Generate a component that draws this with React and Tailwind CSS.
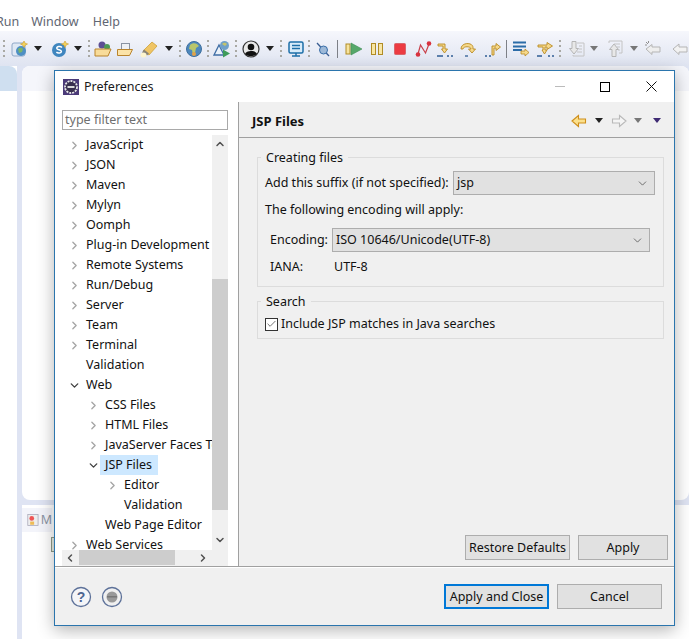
import { ChevronRight, ChevronDown, ChevronUp, ChevronLeft, Check } from "lucide-react"

function Grip({ className }) {
  return (
    <div className={`flex h-[22px] w-[2px] shrink-0 flex-col justify-between py-[2px] ${className}`}>
      <i className="h-[2px] bg-[#a9a9a4]" />
      <i className="h-[2px] bg-[#a9a9a4]" />
      <i className="h-[2px] bg-[#a9a9a4]" />
      <i className="h-[2px] bg-[#a9a9a4]" />
    </div>
  )
}

function Drop({ className, color = "border-t-[#222]" }) {
  return (
    <div className={`mr-px h-0 w-0 shrink-0 border-x-[4px] border-t-[5px] border-x-transparent ${color} ${className}`} />
  )
}

function Sep({ className }) {
  return <div className={`h-[18px] w-px shrink-0 bg-[#7d8087] ${className}`} />
}

function Ico({ className, children }) {
  return (
    <svg viewBox="0 0 18 18" className={`h-[18px] w-[18px] shrink-0 ${className}`}>
      {children}
    </svg>
  )
}

function Toolbar() {
  return (
    <div className="flex h-[35px] items-center bg-gradient-to-b from-[#f6f7fc] to-[#dfe4f1] pl-[3px]">
      <Grip />
      <Ico className="ml-[6px]">
        <rect x="1" y="3" width="13" height="13" rx="2" fill="#dfe8f4" stroke="#8fa8c8" />
        <circle cx="10" cy="11" r="5" fill="#4d8fc4" />
        <path d="M7 9c2-2 4-1 5 0l-1 3-3 1z" fill="#7cb56a" />
        <path d="M13 1l1.200 2.300L16.500 4l-2.300 1.200L13 7.500 11.800 5.200 9.500 4l2.300-.7z" fill="#f3d35c" stroke="#c99a2a" strokeWidth=".6" />
      </Ico>
      <Drop className="ml-[5px]" />
      <Ico className="ml-[8px]">
        <circle cx="8" cy="10" r="7" fill="#3f86bf" />
        <path d="M11 7.500C9.500 6 5.500 6.300 5.800 8.400c.3 1.900 4.600 1 4.600 3 0 1.900-3.600 1.900-5 .7" fill="none" stroke="#fff" strokeWidth="1.500" />
        <path d="M14 1l1.100 2.200L17.500 4l-2.400 1L14 7.500 12.900 5 10.500 4l2.400-.8z" fill="#f3d35c" stroke="#c99a2a" strokeWidth=".6" />
      </Ico>
      <Drop className="ml-[5px]" />
      <Grip className="ml-[5px]" />
      <Ico className="ml-[4px]">
        <circle cx="8" cy="5" r="3.500" fill="#5d4f94" />
        <circle cx="13" cy="7" r="3" fill="#4d9a55" />
        <path d="M1 9h12l4 0-3 7H1z" fill="#f8dc9a" stroke="#b9842d" />
      </Ico>
      <Ico className="ml-[4px]">
        <rect x="5.500" y="3.500" width="8" height="6" fill="#eef1f6" stroke="#8a93a3" />
        <path d="M1.500 9.500h15l-3 6h-12z" fill="#fbe3a8" stroke="#b9842d" />
      </Ico>
      <Ico className="ml-[6px]">
        <path d="M3 11L12 2l5 4-8 9z" fill="#f0c565" stroke="#c99a2a" strokeWidth=".7" />
        <path d="M4 9.500l5 4-2 2-5-3z" fill="#8a8577" />
        <ellipse cx="3.500" cy="15" rx="3" ry="2.500" fill="#fdf5cf" />
      </Ico>
      <Drop className="ml-[7px]" />
      <Grip className="ml-[5px]" />
      <Ico className="ml-[4px]">
        <circle cx="9" cy="9" r="7.500" fill="#4e88bd" stroke="#3e6f9e" />
        <path d="M5 5c3-3 7-2 9 1l-3 2-1 5-2 2-1-5-3-1z" fill="#b9c66b" />
        <circle cx="9" cy="14" r="2" fill="#e0a14a" />
      </Ico>
      <Grip className="ml-[4px]" />
      <Ico className="ml-[4px]">
        <path d="M1 15L6 5l5 10z" fill="#eaf1f9" stroke="#3f6ea5" strokeWidth="1.300" />
        <circle cx="11.500" cy="5.500" r="4.500" fill="#6fa0c9" />
        <path d="M9 4c2-2 4-1 5 0l-2 2z" fill="#c5c36a" />
        <path d="M10 9.500l7 4-7 4z" fill="#3e9c5a" />
      </Ico>
      <Grip className="ml-[4px]" />
      <Ico className="ml-[5px]">
        <circle cx="9" cy="9" r="8" fill="#e9e9e9" stroke="#333" strokeWidth="1.200" />
        <circle cx="9" cy="7" r="3.300" fill="#111" />
        <path d="M3 14c1-4 11-4 12 0-3 3-9 3-12 0z" fill="#111" />
      </Ico>
      <Drop className="ml-[6px]" />
      <Grip className="ml-[5px]" />
      <Ico className="ml-[5px]">
        <rect x="2" y="2" width="14" height="11" rx="1.500" fill="#d8ecfa" stroke="#1d6fa8" strokeWidth="1.500" />
        <path d="M5 5.500h8M5 8.500h8" stroke="#1d6fa8" strokeWidth="1.300" />
        <path d="M5 16h8M9 13v3" stroke="#1d6fa8" strokeWidth="1.500" />
      </Ico>
      <Grip className="ml-[3px]" />
      <Ico className="ml-[4px]">
        <path d="M3 3l12 13" stroke="#3a5d92" strokeWidth="1.300" />
        <circle cx="9.500" cy="10" r="4" fill="#9db9d8" stroke="#3a6ea8" />
      </Ico>
      <Sep className="ml-[5px]" />
      <Ico className="ml-[7px]">
        <rect x="1" y="4" width="4" height="10" fill="#f6e39e" stroke="#b08c26" />
        <path d="M6 3l11 6-11 6z" fill="#56a86a" stroke="#3d8d56" strokeWidth=".6" />
      </Ico>
      <Ico className="ml-[5px]">
        <rect x="3.500" y="3.500" width="4" height="11" fill="#f8e6a5" stroke="#b08c26" />
        <rect x="10.500" y="3.500" width="4" height="11" fill="#f8e6a5" stroke="#b08c26" />
      </Ico>
      <Ico className="ml-[5px]">
        <rect x="3.500" y="3.500" width="11" height="11" rx="1" fill="#ec3b42" stroke="#d8656b" />
      </Ico>
      <Ico className="ml-[5px]">
        <path d="M4 14L6.500 5l5 8L15 4" fill="none" stroke="#c9404a" strokeWidth="1.200" />
        <circle cx="4" cy="14.500" r="2.300" fill="#d8323f" />
        <circle cx="15" cy="3.500" r="2.300" fill="#d8323f" />
      </Ico>
      <Ico className="ml-[4px]">
        <path d="M2 4h7v5h2.500L8.500 13 5.500 9H7V6H2z" fill="#f6d98b" stroke="#b98a22" strokeWidth=".9" />
        <path d="M1 16h6M11 16h2M15 16h2" stroke="#2f5d94" strokeWidth="1.300" />
      </Ico>
      <Ico className="ml-[5px]">
        <path d="M2 9C2 2 14 2 14 7.500V9h2.500L13 13 9.500 9H12c0-3-8-3-8 0z" fill="#f6d98b" stroke="#b98a22" strokeWidth=".9" />
        <path d="M6 16h3" stroke="#2f5d94" strokeWidth="1.300" />
      </Ico>
      <Ico className="ml-[7px]">
        <path d="M8 15V6h4V3.500L16.500 7 12 10.500V8h-2v7z" fill="#f6d98b" stroke="#b98a22" strokeWidth=".9" />
        <path d="M1 16h2M5 16h2" stroke="#2f5d94" strokeWidth="1.300" />
      </Ico>
      <Sep className="ml-[4px]" />
      <Ico className="ml-[5px]">
        <path d="M1 2.500h13M1 6.500h13M1 10h9" stroke="#2b6ca8" strokeWidth="2" />
        <path d="M9 11h4V9l4 3.500-4 3.500v-2H9z" fill="#f6d98b" stroke="#b98a22" strokeWidth=".8" />
      </Ico>
      <Ico className="ml-[7px]">
        <path d="M1 5h9V2.500L15.500 6 10 9.500V7H8v3h2l-2.500 4L5 10h1V7H1z" fill="#f6d98b" stroke="#b98a22" strokeWidth=".9" />
        <path d="M0 16h5M11 16h2M15 16h2" stroke="#2f5d94" strokeWidth="1.300" />
      </Ico>
      <Grip className="ml-[4px]" />
      <Ico className="ml-[7px]">
        <path d="M4 1.500h4v7h2.500L6 14 1.500 8.500H4z" fill="#e8e8e8" stroke="#b5b5b5" />
        <path d="M9 3h7v13H5v-1" fill="none" stroke="#c4c4c4" />
        <path d="M11 6h3M11 9h3M9 12h5" stroke="#c4c4c4" />
      </Ico>
      <Drop className="ml-[4px]" color="border-t-[#777]" />
      <Ico className="ml-[7px]">
        <path d="M6 16.500h4v-7h2.500L8 4 3.500 9.500H6z" fill="#e8e8e8" stroke="#b5b5b5" />
        <path d="M3 3V1h13v12h-3" fill="none" stroke="#c4c4c4" />
        <path d="M8 4h6M11 7h3M12 10h2" stroke="#c4c4c4" />
      </Ico>
      <Drop className="ml-[6px]" color="border-t-[#777]" />
      <Ico className="ml-[5px]">
        <path d="M2 9l6-4.500V7h8v5H8v2.500z" fill="#eee" stroke="#b5b5b5" />
        <path d="M2 2l2 2M4.500 1v2M1 5h2" stroke="#8f8f8f" />
      </Ico>
      <Ico className="ml-[9px]">
        <path d="M2 9l6-5v3h8v5H8v2.500z" fill="#f2f2f2" stroke="#b5b5b5" />
      </Ico>
    </div>
  )
}

// what sits behind the dialog
function Workbench() {
  return (
    <div className="flex h-[639px] flex-col bg-white">
      <div className="flex h-[31px] items-end whitespace-nowrap text-[12.5px] leading-[18px] text-[#5f6672]">
        <span className="ml-[-4px]">Run</span>
        <span className="ml-[12px]">Window</span>
        <span className="ml-[14px]">Help</span>
      </div>
      <Toolbar />
      <div className="flex flex-1 bg-[#dfe4f3]">
        <div className="flex w-[17px] flex-col bg-white">
          <div className="h-[25px] rounded-tr-[8px] bg-[#cfdff0]" />
        </div>
        <div className="ml-[5px] flex flex-1 flex-col">
          <div className="h-[434px] rounded-[8px] bg-white">
            <div className="h-[25px] rounded-t-[8px] bg-[#f5f6fb]" />
          </div>
          <div className="mt-[5px] flex-1 bg-white">
            <div className="mt-[3px] flex h-[24px] w-[30px] items-center bg-[#f3f4fa] pl-[5px] text-[12.5px] text-[#8a93a3]">
              <svg viewBox="0 0 16 16" className="h-4 w-4">
                <rect x="1" y="1" width="13" height="14" fill="#eee" stroke="#aab" />
                <circle cx="6" cy="6" r="3" fill="#e55" />
                <rect x="4" y="10" width="5" height="4" fill="#eb5" />
              </svg>
              <span className="ml-[1px]">M</span>
            </div>
            <div className="ml-[29px] mt-[5px] h-[15px] w-[6px] border border-[#8f9a88] bg-[#e8ede4]" />
          </div>
        </div>
      </div>
    </div>
  )
}

const rows = [
  { label: "JavaScript", level: 0, arrow: "right" },
  { label: "JSON", level: 0, arrow: "right" },
  { label: "Maven", level: 0, arrow: "right" },
  { label: "Mylyn", level: 0, arrow: "right" },
  { label: "Oomph", level: 0, arrow: "right" },
  { label: "Plug-in Development", level: 0, arrow: "right" },
  { label: "Remote Systems", level: 0, arrow: "right" },
  { label: "Run/Debug", level: 0, arrow: "right" },
  { label: "Server", level: 0, arrow: "right" },
  { label: "Team", level: 0, arrow: "right" },
  { label: "Terminal", level: 0, arrow: "right" },
  { label: "Validation", level: 0 },
  { label: "Web", level: 0, arrow: "down" },
  { label: "CSS Files", level: 1, arrow: "right" },
  { label: "HTML Files", level: 1, arrow: "right" },
  { label: "JavaServer Faces Tools", level: 1, arrow: "right" },
  { label: "JSP Files", level: 1, arrow: "down", selected: true },
  { label: "Editor", level: 2, arrow: "right" },
  { label: "Validation", level: 2 },
  { label: "Web Page Editor", level: 1 },
  { label: "Web Services", level: 0, arrow: "right" },
]

function TreeRow({ row }) {
  const indent = row.level === 0 ? "pl-[5px]" : row.level === 1 ? "pl-[24px]" : "pl-[43px]"
  return (
    <div className={`flex h-5 shrink-0 items-center whitespace-nowrap ${indent}`}>
      <span className="flex w-[14px] shrink-0 items-center justify-center">
        {row.arrow === "right" && <ChevronRight size={13} strokeWidth={2.5} className="text-[#a6a6a6]" />}
        {row.arrow === "down" && <ChevronDown size={13} strokeWidth={2.5} className="text-[#404040]" />}
      </span>
      <span className={`h-5 pl-[5px] pr-[6px] leading-5 ${row.selected ? "bg-[#cde8ff]" : ""}`}>{row.label}</span>
    </div>
  )
}

function TreeNav() {
  return (
    <div className="flex w-[183px] shrink-0 flex-col bg-white pl-[7px] pr-[10px] pt-[8px]">
      <div className="flex h-[20px] items-center border border-[#a9a9a9] pl-[2px] text-[#6f6f6f]">type filter text</div>
      <div className="mt-[5px] flex h-[415px] overflow-hidden">
        <div className="flex min-w-0 flex-1 flex-col overflow-hidden">
          {rows.map((row, i) => (
            <TreeRow key={i} row={row} />
          ))}
        </div>
        <div className="flex w-[16px] shrink-0 flex-col items-center bg-[#f0f0f0]">
          <ChevronUp size={12} strokeWidth={3} className="mt-[3px] text-[#505050]" />
          <div className="mt-[129px] h-[231px] w-full bg-[#cdcdcd]" />
          <ChevronDown size={12} strokeWidth={3} className="mt-[24px] text-[#505050]" />
        </div>
      </div>
      <div className="flex h-[16px] shrink-0 items-center bg-[#f0f0f0]">
        <ChevronLeft size={12} strokeWidth={3} className="ml-[2px] text-[#505050]" />
        <div className="ml-[3px] h-[15px] w-[96px] self-start bg-[#cdcdcd]" />
        <ChevronRight size={12} strokeWidth={3} className="ml-[22px] text-[#505050]" />
      </div>
    </div>
  )
}

function Group({ title, className, children }) {
  return (
    <div className={`relative border border-[#dcdcdc] ${className}`}>
      <span className="absolute left-[3px] top-[-10px] h-[19px] bg-[#f0f0f0] px-[5px] leading-[19px]">{title}</span>
      {children}
    </div>
  )
}

function Combo({ value, className }) {
  return (
    <div className={`flex h-[24px] items-center justify-between border border-[#adadad] bg-[#e1e1e1] pl-[3px] pr-[5px] ${className}`}>
      <span>{value}</span>
      <ChevronDown size={13} strokeWidth={1.5} className="text-[#555]" />
    </div>
  )
}

function Btn({ className, children }) {
  return (
    <div className={`flex h-[25px] items-center justify-center bg-[#e1e1e1] pt-px ${className}`}>{children}</div>
  )
}

function Arrow({ className, fill, stroke, flip }) {
  return (
    <svg viewBox="0 0 16 14" className={`h-[14px] w-[16px] ${flip ? "-scale-x-100" : ""} ${className}`}>
      <path d="M1 7l6.500-5.500V5h7v4h-7v3.500z" fill={fill} stroke={stroke} strokeWidth="1.100" />
    </svg>
  )
}

function Page() {
  return (
    <div className="flex min-w-0 flex-1 flex-col border-l border-[#a0a0a0] bg-[#f0f0f0]">
      <div className="flex h-[36px] shrink-0 items-center border-b border-[#a0a0a0] pl-[13px] pr-[12px] pt-[4px]">
        <span className="text-[13px] font-bold">JSP Files</span>
        <div className="mb-[2px] ml-auto flex items-center">
          <Arrow fill="#fbe08c" stroke="#cf8f1b" />
          <Drop className="ml-[8px]" />
          <Arrow className="ml-[7px]" fill="#f5f5f5" stroke="#b9b9b9" flip />
          <Drop className="ml-[7px]" color="border-t-[#777]" />
          <Drop className="ml-[10px]" color="border-t-[#3f2a73]" />
        </div>
      </div>
      <div className="flex flex-1 flex-col pl-[18px] pr-[10px] pt-[19px]">
        <Group title="Creating files" className="h-[130px]">
          <div className="mt-[13px] flex h-[24px] items-center whitespace-nowrap pl-[7px] pr-[8px]">
            <span className="pt-px">Add this suffix (if not specified):</span>
            <Combo value="jsp" className="ml-auto w-[202px]" />
          </div>
          <div className="mt-[5px] h-[20px] pl-[7px] leading-5">The following encoding will apply:</div>
          <div className="mt-[8px] flex h-[24px] items-center whitespace-nowrap pl-[12px] pr-[13px]">
            <span>Encoding:</span>
            <Combo value="ISO 10646/Unicode(UTF-8)" className="ml-auto w-[318px]" />
          </div>
          <div className="mt-[5px] flex h-[20px] items-center pl-[12px]">
            <span className="w-[64px]">IANA:</span>
            <span>UTF-8</span>
          </div>
        </Group>
        <Group title="Search" className="mt-[14px] h-[38px]">
          <div className="mt-[12px] flex h-[20px] items-center pl-[7px]">
            <span className="flex h-[13px] w-[13px] items-center justify-center border border-[#333] bg-white">
              <Check size={12} strokeWidth={1.5} className="text-[#333]" />
            </span>
            <span className="ml-[3px]">Include JSP matches in Java searches</span>
          </div>
        </Group>
        <div className="mb-[6px] mr-[-4px] mt-auto flex justify-end gap-[8px]">
          <Btn className="w-[105px] border border-[#adadad]">Restore Defaults</Btn>
          <Btn className="w-[90px] border border-[#adadad]">Apply</Btn>
        </div>
      </div>
    </div>
  )
}

function Dialog() {
  return (
    <div className="absolute left-[54px] top-[70px] flex h-[556px] w-[621px] flex-col border border-[#2b75ad] bg-[#f0f0f0] text-[12.5px] text-[#111] shadow-[0_4px_16px_rgba(0,0,0,0.3)]">
      <div className="flex h-[31px] shrink-0 items-center bg-white pl-[8px]">
        <svg viewBox="0 0 16 16" className="h-4 w-4">
          <rect width="16" height="16" fill="#4b3a78" />
          <circle cx="8" cy="8" r="6" fill="#39304f" stroke="#e8e8e8" strokeWidth="1.800" strokeDasharray="2 1" />
          <rect x="4.500" y="7" width="7" height="2" fill="#d9d9d9" />
        </svg>
        <span className="ml-[5px] pt-[2px] text-[#1a1a1a]">Preferences</span>
        <div className="ml-auto flex items-center">
          <div className="h-px w-[10px] bg-[#bbb]" />
          <div className="ml-[35px] h-[10px] w-[10px] border border-black" />
          <svg viewBox="0 0 11 11" className="ml-[36px] mr-[17px] h-[11px] w-[11px]">
            <path d="M0.500 0.500l10 10M10.500 0.500l-10 10" stroke="#111" strokeWidth="1" />
          </svg>
        </div>
      </div>
      <div className="flex min-h-0 flex-1 border-b border-[#a0a0a0]">
        <TreeNav />
        <Page />
      </div>
      <div className="flex h-[58px] shrink-0 items-center border-t border-white pl-[15px] pr-[12px]">
        <svg viewBox="0 0 22 22" className="h-[22px] w-[22px]">
          <circle cx="11" cy="11" r="9.500" fill="#f4f5f8" stroke="#5d7199" strokeWidth="1.300" />
          <text x="11" y="16" textAnchor="middle" fontSize="14" fontWeight="700" fill="#4c6491" fontFamily="Liberation Sans">?</text>
        </svg>
        <svg viewBox="0 0 22 22" className="ml-[9px] h-[22px] w-[22px]">
          <circle cx="11" cy="11" r="9.500" fill="#f0f0f0" stroke="#5d7199" strokeWidth="1.300" />
          <circle cx="11" cy="11" r="5.500" fill="#999" />
          <rect x="6" y="10" width="10" height="1.500" fill="#777" />
        </svg>
        <div className="ml-auto flex gap-[8px]">
          <Btn className="w-[105px] border-2 border-[#0078d7]">Apply and Close</Btn>
          <Btn className="w-[105px] border border-[#adadad]">Cancel</Btn>
        </div>
      </div>
    </div>
  )
}

export default function App() {
  return (
    <div className="relative h-[639px] w-[689px] overflow-hidden [font-family:'Noto_Sans',sans-serif]">
      <Workbench />
      <Dialog />
    </div>
  )
}
